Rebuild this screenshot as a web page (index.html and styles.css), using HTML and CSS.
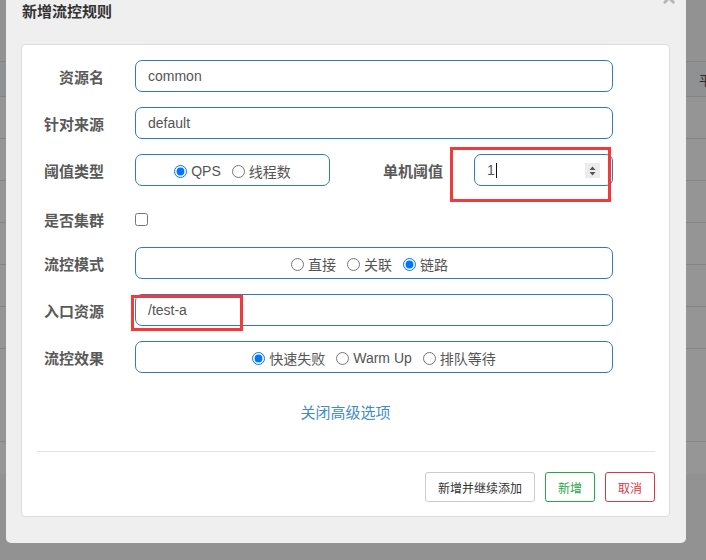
FILE: index.html
```html
<!DOCTYPE html>
<html lang="zh-CN">
<head>
<meta charset="utf-8">
<title>新增流控规则</title>
<link rel="stylesheet" href="styles.css">
</head>
<body>
<div class="page">
  <div class="bg-table">
    <div class="bg-head"><span class="bg-th">平</span></div>
    <div class="bg-row"></div>
    <div class="bg-row"></div>
    <div class="bg-row"></div>
    <div class="bg-row"></div>
    <div class="bg-row"></div>
    <div class="bg-row"></div>
    <div class="bg-row bg-row-tall"></div>
    <div class="bg-foot"></div>
  </div>
</div>

<div class="modal">
  <div class="modal-title">新增流控规则</div>
  <span class="close">×</span>
  <div class="card">
    <form class="form">
      <div class="row">
        <label class="lbl">资源名</label>
        <input class="field" type="text" value="common">
      </div>
      <div class="row">
        <label class="lbl">针对来源</label>
        <input class="field" type="text" value="default">
      </div>
      <div class="row">
        <label class="lbl">阈值类型</label>
        <div class="box box-small">
          <label class="opt"><input type="radio" name="grade" checked>QPS</label>
          <label class="opt"><input type="radio" name="grade">线程数</label>
        </div>
        <label class="lbl lbl-mid">单机阈值</label>
        <div class="num">
          <span class="num-val">1</span><span class="caret"></span>
          <span class="spin">
            <svg width="15" height="15" viewBox="0 0 15 15"><polygon points="4.5,7 10.5,7 7.5,3.5" fill="#555"/><polygon points="4.5,9 10.5,9 7.5,12.5" fill="#555"/></svg>
          </span>
        </div>
      </div>
      <div class="row row-check">
        <label class="lbl">是否集群</label>
        <input class="check" type="checkbox">
      </div>
      <div class="row">
        <label class="lbl">流控模式</label>
        <div class="box box-wide box-shift">
          <label class="opt"><input type="radio" name="mode">直接</label>
          <label class="opt"><input type="radio" name="mode">关联</label>
          <label class="opt"><input type="radio" name="mode" checked>链路</label>
        </div>
      </div>
      <div class="row">
        <label class="lbl">入口资源</label>
        <input class="field" type="text" value="/test-a">
      </div>
      <div class="row">
        <label class="lbl">流控效果</label>
        <div class="box box-wide">
          <label class="opt"><input type="radio" name="effect" checked>快速失败</label>
          <label class="opt"><input type="radio" name="effect">Warm Up</label>
          <label class="opt"><input type="radio" name="effect">排队等待</label>
        </div>
      </div>
    </form>
    <div class="adv"><a class="adv-link">关闭高级选项</a></div>
    <div class="divider"></div>
    <div class="actions">
      <button class="btn btn-default" type="button">新增并继续添加</button>
      <button class="btn btn-success" type="button">新增</button>
      <button class="btn btn-danger" type="button">取消</button>
    </div>
  </div>
</div>

<div class="anno anno-1"></div>
<div class="anno anno-2"></div>
</body>
</html>
```

FILE: styles.css
```css
* {
  box-sizing: border-box;
}

html, body {
  margin: 0;
  padding: 0;
}

body {
  position: relative;
  width: 706px;
  height: 560px;
  overflow: hidden;
  background: #929292;
  font-family: "Liberation Sans", "Noto Sans CJK SC", sans-serif;
}

/* dimmed page behind the modal */
.page {
  padding-top: 61px;
}

.bg-table {
  background: #959595;
}

.bg-head {
  height: 36px;
  border-top: 1px solid #858585;
  border-bottom: 1px solid #858585;
  background: #8f9193;
  display: flex;
  align-items: center;
}

.bg-th {
  padding-left: 699px;
  font-size: 13px;
  color: #2b2b2b;
  white-space: nowrap;
}

.bg-row {
  height: 42px;
  border-bottom: 1px solid #858585;
}

.bg-row-tall {
  height: 93px;
}

.bg-foot {
  height: 32px;
  background: #969696;
}

/* modal */
.modal {
  position: absolute;
  left: 6px;
  top: 0;
  width: 680px;
  height: 543px;
  background: #efefef;
  border-radius: 0 0 5px 5px;
  padding: 2px 16px 0 15px;
}

.modal-title {
  padding-left: 1px;
  height: 20px;
  line-height: 20px;
  font-size: 15px;
  font-weight: bold;
  color: #333;
}

.close {
  position: absolute;
  right: 10px;
  top: -14px;
  font-size: 24px;
  line-height: 24px;
  font-weight: bold;
  color: #b4b4b4;
}

.card {
  margin-top: 22px;
  height: 473px;
  background: #fff;
  border: 1px solid #dcdcdc;
  border-radius: 4px;
}

.form {
  margin: 0;
  padding-top: 15px;
}

.row {
  display: flex;
  align-items: center;
  height: 32px;
  margin-bottom: 15px;
}

.row-check {
  height: 31px;
  padding-top: 6px;
}

.lbl {
  width: 82px;
  margin-right: 31px;
  text-align: right;
  font-size: 15px;
  font-weight: bold;
  color: #595959;
  white-space: nowrap;
}

.lbl-mid {
  width: 113px;
}

.field {
  width: 478px;
  height: 32px;
  margin: 0;
  border: 1px solid #337ab7;
  border-radius: 7px;
  padding: 0 12px;
  font-family: "Liberation Sans", "Noto Sans CJK SC", sans-serif;
  font-size: 14px;
  color: #555;
  background: #fff;
  outline: none;
}

.box {
  height: 32px;
  border: 1px solid #337ab7;
  border-radius: 7px;
  display: flex;
  align-items: center;
  justify-content: center;
  gap: 11px;
  padding-top: 2px;
}

.box-small {
  width: 195px;
}

.box-wide {
  width: 478px;
}

.box-shift {
  padding-right: 9px;
}

.opt {
  display: flex;
  align-items: center;
  font-size: 14px;
  color: #555;
  white-space: nowrap;
}

.opt input {
  width: 13px;
  height: 13px;
  margin: 0 4px 0 0;
}

.num {
  width: 139px;
  height: 32px;
  border: 1px solid #337ab7;
  border-radius: 7px;
  padding: 0 12px 0 12px;
  display: flex;
  align-items: center;
  font-size: 14px;
  color: #555;
}

.caret {
  display: inline-block;
  width: 1px;
  height: 15px;
  background: #111;
  margin-left: 1px;
}

.spin {
  margin-left: auto;
  width: 15px;
  height: 15px;
  background: #ececec;
  display: flex;
}

.check {
  width: 13px;
  height: 13px;
  margin: 0;
}

.adv {
  margin-top: 30px;
  height: 20px;
  line-height: 20px;
  text-align: center;
  font-size: 15px;
}

.adv-link {
  color: #428bca;
  text-decoration: none;
}

.divider {
  margin: 28px 14px 0 15px;
  height: 1px;
  background: #e3e3e3;
}

.actions {
  display: flex;
  justify-content: flex-end;
  gap: 10px;
  margin: 20px 14px 0 0;
}

.btn {
  height: 30px;
  padding: 0 12px;
  margin: 0;
  background: #fff;
  border-radius: 3px;
  font-family: "Liberation Sans", "Noto Sans CJK SC", sans-serif;
  font-size: 12px;
  white-space: nowrap;
}

.btn-default {
  border: 1px solid #cccccc;
  color: #333;
}

.btn-success {
  border: 1px solid #28a745;
  color: #28a745;
}

.btn-danger {
  border: 1px solid #dc3545;
  color: #dc3545;
}

/* red annotation rectangles drawn over the screenshot */
.anno {
  position: absolute;
  border: 3px solid #f23a3a;
}

.anno-1 {
  left: 450px;
  top: 147px;
  width: 161px;
  height: 55px;
}

.anno-2 {
  left: 131px;
  top: 295px;
  width: 112px;
  height: 36px;
}
```
